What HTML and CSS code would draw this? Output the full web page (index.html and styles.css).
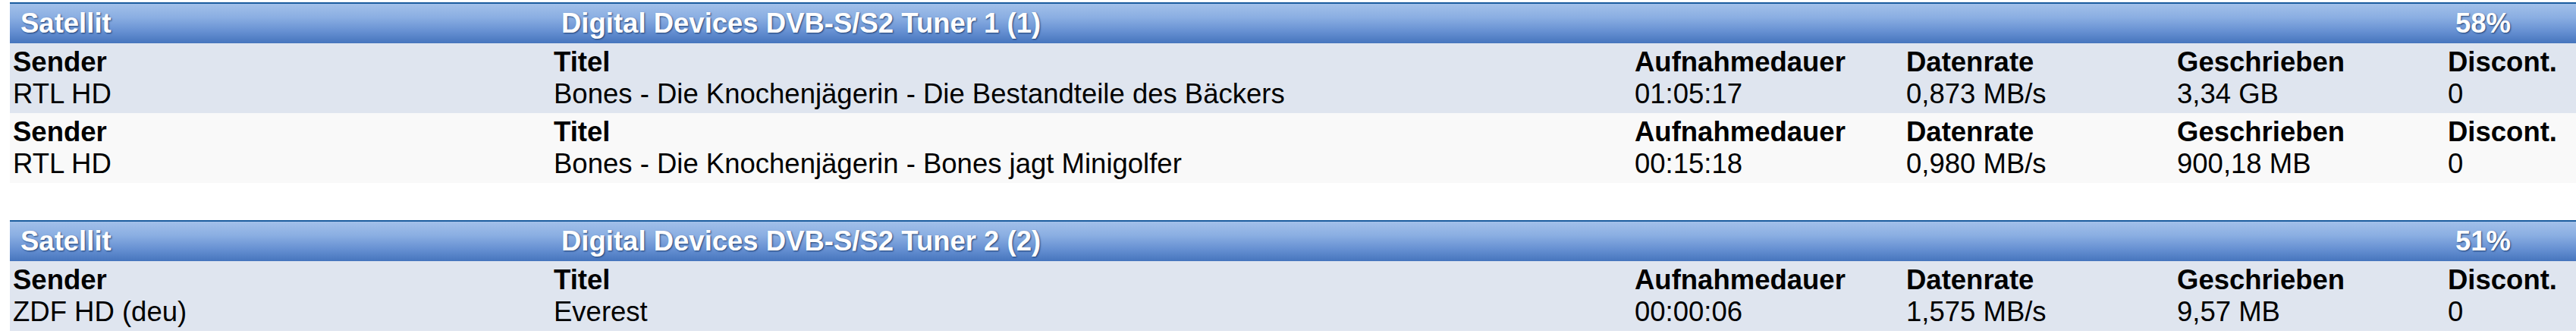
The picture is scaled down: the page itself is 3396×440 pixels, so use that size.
FILE: index.html
```html
<!DOCTYPE html>
<html lang="de">
<head>
<meta charset="utf-8">
<title>Aufnahmen</title>
<link rel="stylesheet" href="styles.css">
</head>
<body>
<main class="page">
  <section class="tuner">
    <div class="tuner-head">
      <div class="hcell">Satellit</div>
      <div class="hcell hwide">Digital Devices DVB-S/S2 Tuner 1 (1)</div>
      <div class="hcell">58%</div>
    </div>
    <div class="rec rec-a">
      <div class="cell"><div class="lbl">Sender</div><div class="val">RTL HD</div></div>
      <div class="cell"><div class="lbl">Titel</div><div class="val">Bones - Die Knochenjägerin - Die Bestandteile des Bäckers</div></div>
      <div class="cell"><div class="lbl">Aufnahmedauer</div><div class="val">01:05:17</div></div>
      <div class="cell"><div class="lbl">Datenrate</div><div class="val">0,873 MB/s</div></div>
      <div class="cell"><div class="lbl">Geschrieben</div><div class="val">3,34 GB</div></div>
      <div class="cell"><div class="lbl">Discont.</div><div class="val">0</div></div>
    </div>
    <div class="rec rec-b">
      <div class="cell"><div class="lbl">Sender</div><div class="val">RTL HD</div></div>
      <div class="cell"><div class="lbl">Titel</div><div class="val">Bones - Die Knochenjägerin - Bones jagt Minigolfer</div></div>
      <div class="cell"><div class="lbl">Aufnahmedauer</div><div class="val">00:15:18</div></div>
      <div class="cell"><div class="lbl">Datenrate</div><div class="val">0,980 MB/s</div></div>
      <div class="cell"><div class="lbl">Geschrieben</div><div class="val">900,18 MB</div></div>
      <div class="cell"><div class="lbl">Discont.</div><div class="val">0</div></div>
    </div>
  </section>
  <section class="tuner">
    <div class="tuner-head">
      <div class="hcell">Satellit</div>
      <div class="hcell hwide">Digital Devices DVB-S/S2 Tuner 2 (2)</div>
      <div class="hcell">51%</div>
    </div>
    <div class="rec rec-a">
      <div class="cell"><div class="lbl">Sender</div><div class="val">ZDF HD (deu)</div></div>
      <div class="cell"><div class="lbl">Titel</div><div class="val">Everest</div></div>
      <div class="cell"><div class="lbl">Aufnahmedauer</div><div class="val">00:00:06</div></div>
      <div class="cell"><div class="lbl">Datenrate</div><div class="val">1,575 MB/s</div></div>
      <div class="cell"><div class="lbl">Geschrieben</div><div class="val">9,57 MB</div></div>
      <div class="cell"><div class="lbl">Discont.</div><div class="val">0</div></div>
    </div>
  </section>
</main>
</body>
</html>
```
FILE: styles.css
```css
html, body {
  margin: 0;
  padding: 0;
  background: #ffffff;
}
body {
  font-family: "Liberation Sans", Arial, sans-serif;
  font-size: 36.5px;
  line-height: 42px;
  color: #000000;
}
.page {
  padding: 3px 0 0 13px;
  display: flex;
  flex-direction: column;
  gap: 49px;
}
.tuner {
  display: flex;
  flex-direction: column;
}
.tuner-head,
.rec {
  display: grid;
  grid-template-columns: 713px 1425px 358px 357px 357px 1fr;
}
.tuner-head {
  border-top: 2px solid #1a5c9e;
  background: linear-gradient(to bottom, #a2c0e9 0%, #8aaee2 35%, #6690d2 70%, #4675bd 100%);
  padding: 5px 0 5px;
  color: #ffffff;
  font-weight: bold;
  text-shadow: 1px 1px 2px #1d3f73;
}
.hcell {
  padding-left: 14px;
  white-space: nowrap;
}
.hwide {
  grid-column: span 4;
}
.rec {
  padding: 4px 0 4px;
}
.rec-a {
  background: #dfe5ef;
}
.rec-b {
  background: #f9f9f9;
}
.cell {
  padding-left: 4px;
  white-space: nowrap;
}
.lbl {
  font-weight: bold;
}
```
